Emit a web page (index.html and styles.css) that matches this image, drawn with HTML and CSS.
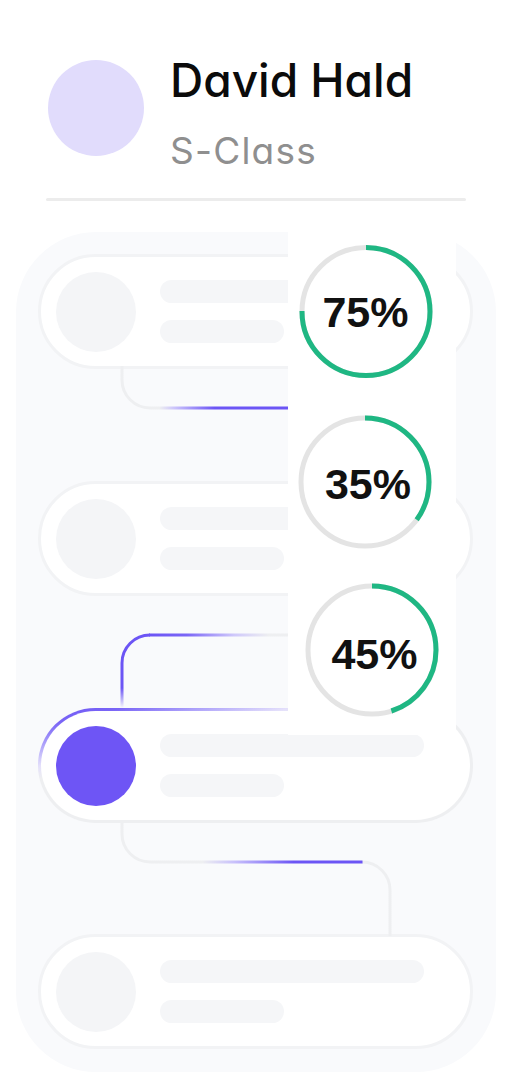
FILE: index.html
```html
<!DOCTYPE html>
<html lang="en">
<head>
<meta charset="utf-8">
<title>David Hald</title>
<link rel="stylesheet" href="styles.css">
</head>
<body>
<div class="page">
  <header class="header">
    <div class="avatar"></div>
    <div class="who">
      <h1 class="name">David Hald</h1>
      <p class="rank">S-Class</p>
    </div>
  </header>
  <div class="divider"></div>

  <section class="card">
    <div class="row">
      <div class="dot"></div>
      <div class="bars"><span class="bar long"></span><span class="bar short"></span></div>
    </div>
    <svg class="link" viewBox="38 369 435 112" width="435" height="112">
      <defs>
        <linearGradient id="g1" gradientUnits="userSpaceOnUse" x1="122" y1="0" x2="300" y2="0">
          <stop offset="0" stop-color="#eeeff1"/>
          <stop offset="0.21" stop-color="#eeeff1"/>
          <stop offset="0.3" stop-color="#c9c1fb"/>
          <stop offset="0.52" stop-color="#6c55f5"/>
          <stop offset="1" stop-color="#6c55f5"/>
        </linearGradient>
      </defs>
      <path d="M122 366 V380 A28 28 0 0 0 150 408 H300" fill="none" stroke="url(#g1)" stroke-width="3"/>
    </svg>
    <div class="row">
      <div class="dot"></div>
      <div class="bars"><span class="bar long"></span><span class="bar short"></span></div>
    </div>
    <svg class="link" viewBox="38 596 435 112" width="435" height="112">
      <defs>
        <linearGradient id="g2v" gradientUnits="userSpaceOnUse" x1="0" y1="708" x2="0" y2="688">
          <stop offset="0" stop-color="#6c55f5" stop-opacity="0"/>
          <stop offset="1" stop-color="#6c55f5"/>
        </linearGradient>
        <linearGradient id="g2h" gradientUnits="userSpaceOnUse" x1="150" y1="0" x2="290" y2="0">
          <stop offset="0" stop-color="#6c55f5"/>
          <stop offset="0.26" stop-color="#7a65f6"/>
          <stop offset="0.6" stop-color="#cfc8fb"/>
          <stop offset="0.85" stop-color="#eeeff1"/>
          <stop offset="1" stop-color="#eeeff1"/>
        </linearGradient>
      </defs>
      <path d="M122 708 V663 A28 28 0 0 1 150 635" fill="none" stroke="url(#g2v)" stroke-width="3"/>
      <path d="M149 635 H300" fill="none" stroke="url(#g2h)" stroke-width="3"/>
    </svg>
    <div class="row active">
      <div class="dot"></div>
      <div class="bars"><span class="bar long"></span><span class="bar short"></span></div>
    </div>
    <svg class="link" viewBox="38 823 435 111" width="435" height="111">
      <defs>
        <linearGradient id="g3" gradientUnits="userSpaceOnUse" x1="122" y1="0" x2="390" y2="0">
          <stop offset="0" stop-color="#eeeff1"/>
          <stop offset="0.3" stop-color="#eeeff1"/>
          <stop offset="0.42" stop-color="#c8c0fb"/>
          <stop offset="0.64" stop-color="#6c55f5"/>
          <stop offset="0.895" stop-color="#6c55f5"/>
          <stop offset="0.9" stop-color="#eeeff1"/>
          <stop offset="1" stop-color="#eeeff1"/>
        </linearGradient>
      </defs>
      <path d="M122 820 V834 A28 28 0 0 0 150 862 H362 A28 28 0 0 1 390 890 V936" fill="none" stroke="url(#g3)" stroke-width="3"/>
    </svg>
    <div class="row">
      <div class="dot"></div>
      <div class="bars"><span class="bar long"></span><span class="bar short"></span></div>
    </div>

    <div class="scores">
      <svg viewBox="0 0 168 503" width="168" height="503">
        <g class="gauge">
          <circle class="track" cx="78" cy="79.5" r="64"/>
          <circle class="fill" cx="78" cy="79.5" r="64" stroke-dasharray="301.6 402.1" transform="rotate(-90 78 79.5)"/>
          <text class="pct" x="77.5" y="95">75%</text>
        </g>
        <g class="gauge">
          <circle class="track" cx="77" cy="250" r="64"/>
          <circle class="fill" cx="77" cy="250" r="64" stroke-dasharray="140.7 402.1" transform="rotate(-90 77 250)"/>
          <text class="pct" x="80" y="267">35%</text>
        </g>
        <g class="gauge">
          <circle class="track" cx="84" cy="418" r="64"/>
          <circle class="fill" cx="84" cy="418" r="64" stroke-dasharray="181 402.1" transform="rotate(-90 84 418)"/>
          <text class="pct" x="86.5" y="437">45%</text>
        </g>
      </svg>
    </div>
  </section>
</div>
</body>
</html>
```

FILE: styles.css
```css
* { box-sizing: border-box; }

html, body {
  margin: 0;
  padding: 0;
  background: #ffffff;
}

.page {
  position: relative;
  width: 512px;
  height: 1088px;
  overflow: hidden;
  font-family: "Inter", "Noto Sans", sans-serif;
}

.header {
  display: flex;
  align-items: flex-start;
  gap: 26px;
  padding: 57px 0 0 48px;
}

.avatar {
  width: 96px;
  height: 96px;
  margin-top: 3px;
  border-radius: 50%;
  background: #e1dcfc;
  flex: none;
}

.who { display: flex; flex-direction: column; }

.name {
  margin: 0;
  font-size: 46px;
  line-height: 46px;
  font-weight: 500;
  color: #0b0b0b;
  letter-spacing: 0;
  font-feature-settings: "cv11";
}

.rank {
  margin: 29px 0 0;
  font-size: 37px;
  line-height: 37px;
  font-weight: 400;
  color: #8f8f8f;
  letter-spacing: 1.2px;
  font-feature-settings: "cv11";
}

.divider {
  width: 420px;
  height: 3px;
  margin: 29px 0 0 46px;
  border-radius: 2px;
  background: #ececec;
}

.card {
  position: relative;
  width: 480px;
  height: 840px;
  margin: 31px 0 0 16px;
  padding: 22px 0 0 22px;
  border-radius: 80px;
  background: #f9fafc;
}

.row {
  display: flex;
  align-items: center;
  gap: 24px;
  width: 435px;
  height: 115px;
  padding-left: 15px;
  border: 3px solid #f2f3f5;
  border-radius: 58px;
  background: #ffffff;
}

.row.active {
  border-color: transparent;
  background:
    linear-gradient(#ffffff, #ffffff) padding-box,
    linear-gradient(167deg, #6c55f5 0%, #7a65f6 9%, #ab9ffa 17%, #e4e0fb 27%, #eeeff1 33%, #eeeff1 100%) border-box;
}

.dot {
  width: 80px;
  height: 80px;
  border-radius: 50%;
  background: #f4f5f7;
  flex: none;
}

.row.active .dot { background: #6e55f5; }

.bars {
  display: flex;
  flex-direction: column;
  gap: 17px;
}

.bar {
  display: block;
  height: 23px;
  border-radius: 12px;
  background: #f5f6f8;
}

.bar.long { width: 264px; }
.bar.short { width: 124px; }

.link {
  display: block;
  overflow: visible;
}

.scores {
  position: absolute;
  left: 272px;
  top: 0;
  width: 168px;
  height: 503px;
  background: #ffffff;
}

.scores svg { display: block; }

.track {
  fill: none;
  stroke: #e4e4e4;
  stroke-width: 5;
}

.fill {
  fill: none;
  stroke: #1fb783;
  stroke-width: 5;
}

.pct {
  font-family: "Liberation Sans", Arial, sans-serif;
  font-weight: 700;
  font-size: 43px;
  fill: #111111;
  text-anchor: middle;
}
```
